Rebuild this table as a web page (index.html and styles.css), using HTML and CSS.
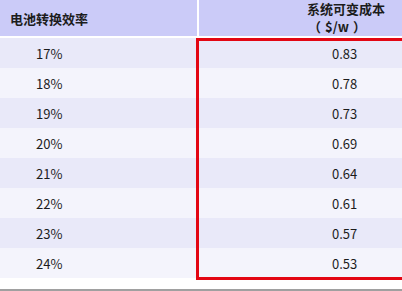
FILE: index.html
```html
<!DOCTYPE html>
<html lang="zh">
<head>
<meta charset="utf-8">
<link rel="stylesheet" href="styles.css">
</head>
<body>
<div class="wrap">
  <div class="table">
    <div class="head">
      <div class="hcell h1">电池转换效率</div>
      <div class="hcell h2"><span class="hl">系统可变成本</span><span class="hl unit"><span class="sp">（</span>$/<span class="sp">w</span>）</span></div>
    </div>
    <div class="row odd"><div class="c1">17%</div><div class="c2">0.83</div></div>
    <div class="row even"><div class="c1">18%</div><div class="c2">0.78</div></div>
    <div class="row odd"><div class="c1">19%</div><div class="c2">0.73</div></div>
    <div class="row even"><div class="c1">20%</div><div class="c2">0.69</div></div>
    <div class="row odd"><div class="c1">21%</div><div class="c2">0.64</div></div>
    <div class="row even"><div class="c1">22%</div><div class="c2">0.61</div></div>
    <div class="row odd"><div class="c1">23%</div><div class="c2">0.57</div></div>
    <div class="row even"><div class="c1">24%</div><div class="c2">0.53</div></div>
  </div>
  <div class="highlight"></div>
  <div class="foot"></div>
</div>
</body>
</html>
```
FILE: styles.css
```css
html, body {
  margin: 0;
  padding: 0;
  background: #ffffff;
  overflow: hidden;
}
body {
  width: 402px;
  height: 291px;
  font-family: "Noto Sans CJK SC", "Noto Sans", sans-serif;
  color: #1c1c1c;
}
.wrap {
  position: relative;
  width: 402px;
  height: 291px;
  overflow: hidden;
}
.table {
  width: 500px;
  display: flex;
  flex-direction: column;
}
.head {
  display: grid;
  grid-template-columns: 197px 1fr;
  column-gap: 2px;
  height: 36px;
  margin-bottom: 2px;
  background: #ffffff;
}
.hcell {
  background: #cbcbf8;
  font-weight: bold;
  font-size: 13px;
  display: flex;
  align-items: center;
}
.h1 {
  padding-left: 10px;
}
.h2 {
  padding-left: 108px;
  flex-direction: column;
  align-items: flex-start;
  justify-content: center;
}
.hl {
  display: block;
  height: 18px;
  line-height: 18px;
}
.unit {
  padding-left: 1px;
}
.sp {
  letter-spacing: 4px;
}
.row {
  display: grid;
  grid-template-columns: 197px 1fr;
  height: 30px;
  align-items: center;
  font-size: 13px;
}
.odd { background: #e9e9f9; }
.even { background: #f4f4fc; }
.c1 { padding-left: 36px; }
.c2 { padding-left: 135px; }
.highlight {
  position: absolute;
  left: 196px;
  top: 38px;
  width: 300px;
  height: 236px;
  border: 3px solid #e30613;
}
.foot {
  height: 13px;
  border-bottom: 2px solid #a0a0a0;
  margin-top: -2px;
}
```
